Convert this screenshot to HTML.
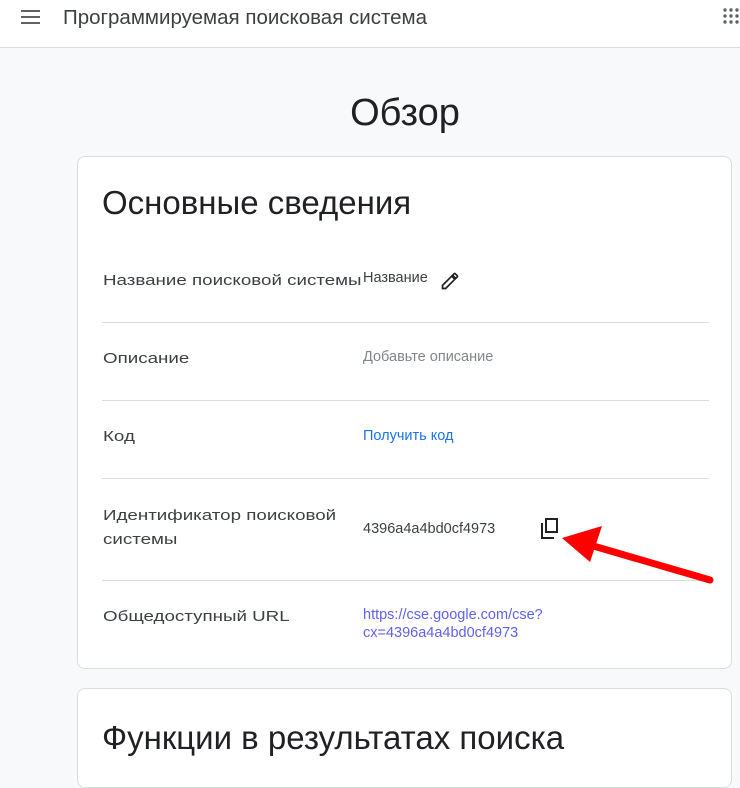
<!DOCTYPE html>
<html><head><meta charset="utf-8"><style>
*{margin:0;padding:0;box-sizing:border-box}
body{width:740px;height:756px;overflow:hidden;background:#f8f9fa;font-family:"Liberation Sans",sans-serif;color:#202124;position:relative}
.hdr{position:absolute;left:0;top:0;width:740px;height:48px;background:#fff;border-bottom:1px solid #dadce0}
.hdr .t{position:absolute;left:63px;top:6px;font-size:20.5px;color:#3c4043}
.h1{position:absolute;left:0;width:810px;text-align:center;top:92px;font-size:38px;color:#202124}
.card{position:absolute;left:77px;width:655px;background:#fff;border:1px solid #dadce0;border-radius:8px}
.c1{top:156px;height:513px}
.c2{top:688px;height:100px}
.ct{position:absolute;left:24px;font-size:33px;color:#202124;white-space:nowrap}
.row{position:absolute;left:24px;width:607px;border-bottom:1px solid #dadce0}
.lbl{position:absolute;left:25px;font-size:15px;color:#3c4043;line-height:24px;transform:scaleX(1.25);transform-origin:left;white-space:nowrap}
.val{position:absolute;left:285px;font-size:14.5px;color:#3c4043;line-height:18px}
.gray{color:#80868b}.blue{color:#1a73e8}.url{color:#5f61f0}
</style></head><body>
<div class="hdr">
<svg style="position:absolute;left:21px;top:10px" width="20" height="14"><rect y="0" width="19" height="2" fill="#5f6368"/><rect y="6" width="19" height="2" fill="#5f6368"/><rect y="12" width="19" height="2" fill="#5f6368"/></svg>
<div class="t">Программируемая поисковая система</div>
<svg style="position:absolute;left:723px;top:8px" width="17" height="17" fill="#5f6368"><circle cx="2" cy="2" r="1.7"/><circle cx="8" cy="2" r="1.7"/><circle cx="14" cy="2" r="1.7"/><circle cx="2" cy="8" r="1.7"/><circle cx="8" cy="8" r="1.7"/><circle cx="14" cy="8" r="1.7"/><circle cx="2" cy="14" r="1.7"/><circle cx="8" cy="14" r="1.7"/><circle cx="14" cy="14" r="1.7"/></svg>
</div>
<div class="h1">Обзор</div>
<div class="card c1">
<div class="ct" style="top:27px">Основные сведения</div>
<div class="lbl" style="top:112px">Название поисковой системы</div>
<div class="val" style="top:112px">Название</div>
<svg style="position:absolute;left:362px;top:114px" width="20" height="20" viewBox="0 0 24 24"><path d="M3 17.25V21h3.75L17.8 9.94l-3.75-3.75L3 17.25zM20.7 7.04a1 1 0 000-1.41l-2.34-2.34a1 1 0 00-1.41 0l-1.83 1.83 3.75 3.75 1.83-1.83z" fill="none" stroke="#202124" stroke-width="2"/></svg>
<div class="row" style="top:165px"></div>
<div class="lbl" style="top:190px">Описание</div>
<div class="val gray" style="top:191px">Добавьте описание</div>
<div class="row" style="top:243px"></div>
<div class="lbl" style="top:268px">Код</div>
<div class="val blue" style="top:270px">Получить код</div>
<div class="row" style="top:321px"></div>
<div class="lbl" style="top:347px">Идентификатор поисковой<br>системы</div>
<div class="val" style="top:363px">4396a4a4bd0cf4973</div>
<svg style="position:absolute;left:459px;top:360px" width="24" height="24" viewBox="0 0 24 24"><path d="M9 2h11v13H9z M5 6v15h12" fill="none" stroke="#202124" stroke-width="2"/></svg>
<div class="row" style="top:423px"></div>
<div class="lbl" style="top:448px">Общедоступный URL</div>
<div class="val url" style="top:449px">https://cse.google.com/cse?<br>cx=4396a4a4bd0cf4973</div>
</div>
<div class="card c2"><div class="ct" style="top:30px">Функции в результатах поиска</div></div>
<svg style="position:absolute;left:560px;top:520px" width="160" height="70"><path d="M150 60 L30 25" stroke="#f00" stroke-width="7" stroke-linecap="round"/><path d="M2 18 L42 6 L30 42 Z" fill="#f00"/></svg>
</body></html>
